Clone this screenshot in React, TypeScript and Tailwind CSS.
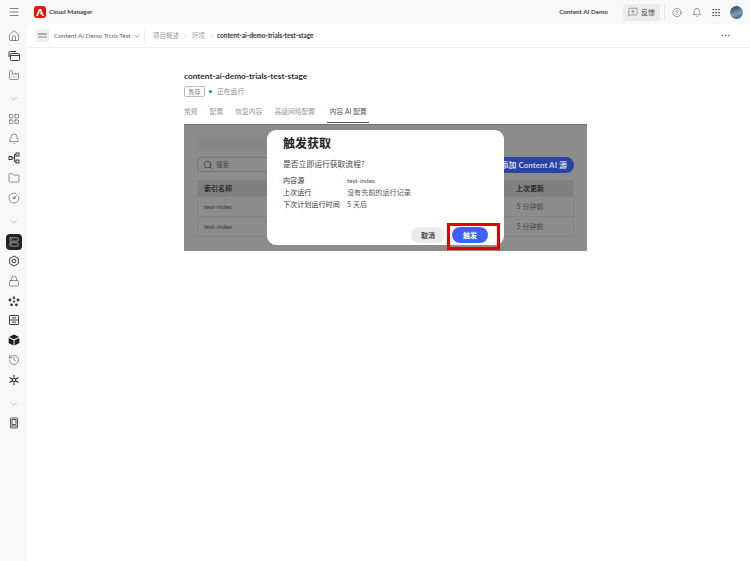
import {
  Bell,
  ChevronDown,
  ChevronRight,
  CircleGauge,
  CircleHelp,
  Factory,
  Folder,
  Grip,
  History,
  House,
  LayoutGrid,
  Lock,
  Menu,
  MessageSquarePlus,
  MoreHorizontal,
  Search,
  Server,
} from "lucide-react";
import type { ReactNode } from "react";

const font = "font-['Lato','Noto_Sans_CJK_SC',sans-serif]";

function StackIcon() {
  return (
    <svg width="12" height="12" viewBox="0 0 12 12" fill="none" stroke="#3a3a3a" strokeWidth="1">
      <path d="M1 7V2.500a1 1 0 0 1 1-1h6" />
      <rect x="2.500" y="3.500" width="9" height="7" rx="1" />
      <path d="M2.500 5.500h9" />
    </svg>
  );
}

function HexIcon() {
  return (
    <svg width="12" height="12" viewBox="0 0 12 12" fill="none" stroke="#3a3a3a" strokeWidth="1">
      <path d="M6 1l4.300 2.500v5L6 11 1.700 8.500v-5z" />
      <circle cx="6" cy="6" r="1.800" />
    </svg>
  );
}

function StarIcon() {
  return (
    <svg width="12" height="12" viewBox="0 0 12 12" fill="#3a3a3a">
      <path d="M6 .6l1.300 2.600L6 4.400 4.700 3.200z" />
      <circle cx="2" cy="5" r="1.400" />
      <circle cx="10" cy="5" r="1.400" />
      <circle cx="3.600" cy="9.800" r="1.400" />
      <circle cx="8.400" cy="9.800" r="1.400" />
      <circle cx="6" cy="6.500" r="1.100" />
    </svg>
  );
}

function PanelIcon() {
  return (
    <svg width="12" height="12" viewBox="0 0 12 12" fill="none" stroke="#3a3a3a" strokeWidth="1">
      <rect x="1.500" y="1.500" width="9" height="9" rx="0.800" />
      <path d="M1.500 6h9M4 3.800h4M4 8.200h4" />
    </svg>
  );
}

function CubeIcon() {
  return (
    <svg width="12" height="12" viewBox="0 0 12 12" fill="#1c1c1c">
      <path d="M6 .5l5 2.400L6 5.300 1 2.900z" />
      <path d="M.7 3.900l4.800 2.300v5.300L.7 9.100z" />
      <path d="M11.300 3.900L6.500 6.200v5.300l4.800-2.400z" />
    </svg>
  );
}

function SparkIcon() {
  return (
    <svg width="12" height="12" viewBox="0 0 12 12" fill="none" stroke="#2c2c2c" strokeWidth="1.100">
      <circle cx="6" cy="6" r="1.700" />
      <path d="M6 .8v3M6 8.200v3M1.500 3.400l2.600 1.500M7.900 7.100l2.600 1.500M1.500 8.600l2.600-1.500M7.900 4.900l2.600-1.500" />
    </svg>
  );
}

function FlowIcon() {
  return (
    <svg width="12" height="12" viewBox="0 0 12 12" fill="none" stroke="#3a3a3a" strokeWidth="1">
      <rect x="1" y="4.500" width="3" height="3" />
      <rect x="8" y="1" width="3" height="3" />
      <rect x="8" y="8" width="3" height="3" />
      <path d="M4 6h2.500M6.500 2.500V9.500M6.500 2.500H8M6.500 9.500H8" />
    </svg>
  );
}

function GuideIcon() {
  return (
    <svg width="12" height="12" viewBox="0 0 12 12" fill="none" stroke="#555" strokeWidth="1">
      <rect x="2.500" y="1" width="7" height="10" rx="0.600" />
      <path d="M4 2.500h4v5H4zM2.500 9h7" />
    </svg>
  );
}

function SideItem({ children }: { children: ReactNode }) {
  return <div className="h-[19.700px] flex items-center justify-center">{children}</div>;
}

function SideChevron() {
  return (
    <div className="h-[19.700px] mt-[4.500px] flex items-center justify-center">
      <ChevronDown size={10} strokeWidth={1} color="#666" />
    </div>
  );
}

function Sidebar() {
  const s = { size: 12, strokeWidth: 1.1, color: "#3a3a3a" };
  return (
    <aside className="w-[27px] shrink-0 flex flex-col pt-[2px]">
      <div className="h-[20px] flex items-center justify-center">
        <Menu size={12} strokeWidth={1.2} color="#333" />
      </div>
      <div className="h-[4px]" />
      <SideItem><House {...s} /></SideItem>
      <SideItem><StackIcon /></SideItem>
      <SideItem><Factory {...s} /></SideItem>
      <SideChevron />
      <SideItem><LayoutGrid {...s} /></SideItem>
      <SideItem><Bell {...s} /></SideItem>
      <SideItem><FlowIcon /></SideItem>
      <SideItem><Folder {...s} /></SideItem>
      <SideItem><CircleGauge {...s} /></SideItem>
      <SideChevron />
      <SideItem>
        <div className="w-[16px] h-[16px] rounded-[4px] bg-[#222222] flex items-center justify-center">
          <Server size={10} strokeWidth={1.3} color="#fff" />
        </div>
      </SideItem>
      <SideItem><HexIcon /></SideItem>
      <SideItem><Lock {...s} /></SideItem>
      <SideItem><StarIcon /></SideItem>
      <SideItem><PanelIcon /></SideItem>
      <SideItem><CubeIcon /></SideItem>
      <SideItem><History {...s} /></SideItem>
      <SideItem><SparkIcon /></SideItem>
      <SideChevron />
      <SideItem><GuideIcon /></SideItem>
    </aside>
  );
}

function TopBar() {
  return (
    <header className="h-[24px] flex items-center pl-[7px] pr-[7px]">
      <div className="w-[12px] h-[12px] rounded-[3px] bg-[#eb1000] flex items-center justify-center">
        <svg width="8" height="7" viewBox="0 0 8 7" fill="#fff">
          <path d="M2.900 0h2.200L8 7H6L5.200 5H3.500l.8-1.600h.5L4 1.500 2 7H0z" />
        </svg>
      </div>
      <span className="ml-[3px] text-[6.400px] font-bold text-[#444]">Cloud Manager</span>
      <span className="ml-auto text-[6.300px] font-bold text-[#444]">Content AI Demo</span>
      <div className="ml-[15px] w-[37px] h-[17px] rounded-[3px] bg-[#ececec] flex items-center justify-center gap-[3px]">
        <MessageSquarePlus size={10} strokeWidth={1.1} color="#444" />
        <span className="text-[7px] text-[#444]">反馈</span>
      </div>
      <div className="ml-[4px] w-px h-[16px] bg-[#e6e6e6]" />
      <div className="ml-[7px] w-[10px] flex justify-center"><CircleHelp size={11} strokeWidth={1.1} color="#333" /></div>
      <div className="ml-[10px] w-[10px] flex justify-center"><Bell size={11} strokeWidth={1.1} color="#333" /></div>
      <div className="ml-[9px] w-[10px] flex justify-center"><Grip size={11} strokeWidth={1.6} color="#222" /></div>
      <div className="ml-[9px] w-[13px] h-[13px] rounded-full bg-[linear-gradient(160deg,#1f3a55,#7f9db5_60%,#2d4a66)]" />
    </header>
  );
}

function SubHeader() {
  return (
    <div className="h-[24px] border-b border-[#efefef] flex items-center pl-[9px] pr-[19.500px]">
      <div className="w-[13px] h-[13px] bg-[#efefef] rounded-[1px] flex flex-col items-center justify-center gap-[1px]">
        <div className="w-[9px] h-[2px] bg-[#aaa]" />
        <div className="w-[9px] h-[2px] bg-[#bbb]" />
      </div>
      <span className="ml-[5px] w-[77px] whitespace-nowrap text-[6.300px] text-[#666]">Content AI Demo Trials Test</span>
      <ChevronDown className="ml-[2px]" size={8} strokeWidth={1.4} color="#444" />
      <div className="ml-[3px] w-px h-[12px] bg-[#eeeeee]" />
      <span className="ml-[8px] text-[6.500px] text-[#999]">项目概述</span>
      <ChevronRight className="ml-[3px]" size={7} strokeWidth={1} color="#999" />
      <span className="ml-[3px] text-[6.500px] text-[#999]">环境</span>
      <ChevronRight className="ml-[3px]" size={7} strokeWidth={1} color="#999" />
      <span className="ml-[2px] text-[6.500px] font-bold text-[#333]">content-ai-demo-trials-test-stage</span>
      <MoreHorizontal className="ml-auto" size={11} strokeWidth={1.4} color="#555" />
    </div>
  );
}

function Tabs() {
  const tabs = ["常规", "配置", "恢复内容", "高级网络配置"];
  return (
    <div className="mt-[6px] mb-[1px] flex gap-[12px] text-[6.800px] text-[#999] h-[20px]">
      {tabs.map((t) => (
        <div key={t} className="pt-[3px]">{t}</div>
      ))}
      <div className="pt-[3px] w-[42px] text-center border-b border-[#555] text-[#555] whitespace-nowrap">内容 AI 配置</div>
    </div>
  );
}

function Modal() {
  return (
    <div className="absolute left-[83px] top-[5px] w-[237px] h-[115px] rounded-[9px] bg-white pl-[16px] pt-[6px] text-[#333]">
      <h3 className="text-[12px] font-bold text-[#222] leading-[16px]">触发获取</h3>
      <p className="mt-[6px] text-[7.800px] leading-[12px] text-[#444]">是否立即运行获取流程?</p>
      <dl className="mt-[5px] grid grid-cols-[64px_1fr] text-[7.100px] leading-[12px]">
        <dt>内容源</dt>
        <dd className="text-[6.300px] text-[#555]">test-index</dd>
        <dt>上次运行</dt>
        <dd className="text-[#555]">没有先前的运行记录</dd>
        <dt>下次计划运行时间</dt>
        <dd className="text-[#555]">5 天后</dd>
      </dl>
      <div className="absolute left-[144px] top-[97px] flex gap-[7px]">
        <button className="w-[34px] h-[16px] rounded-full bg-[#ebebeb] text-[7px] text-[#444] font-bold">取消</button>
        <button className="w-[36px] h-[16px] rounded-full bg-[#3b63fb] text-[7px] text-white font-bold">触发</button>
      </div>
      <div className="absolute left-[180px] top-[93px] w-[53px] h-[27px] border-[3px] border-[#e00000]" />
    </div>
  );
}

function ScreenPanel() {
  const rows = ["test-index", "test-index"];
  return (
    <div className="relative h-[127px] bg-[#8c8c8c] px-[13px] pt-[12px] border-t border-[#777]">
      <div className="w-[70px] h-[14px] bg-[#858585] rounded-[2px] blur-[2px]" />
      <div className="mt-[6px] flex items-start justify-between">
        <div className="w-[80px] h-[15px] rounded-[3px] border border-[#777] flex items-center pl-[5px] gap-[3px] text-[6.500px] text-[#444]">
          <Search size={10} strokeWidth={1.8} color="#333" />
          搜索
        </div>
        <div className="h-[16px] px-[7px] rounded-full bg-[#2843a3] text-[8px] font-bold text-[#d0d4e8] leading-[16px]">
          添加 Content AI 源
        </div>
      </div>
      <div className="mt-[7px] border border-[#858585] text-[7px] text-[#333]">
        <div className="h-[15px] bg-[#7f7f7f] flex items-center justify-between pl-[6px] pr-[22px] font-semibold text-[#2a2a2a]">
          <span>索引名称</span>
          <span className="w-[42px] text-center">上次更新</span>
        </div>
        {rows.map((r, i) => (
          <div key={i} className="h-[20px] border-t border-[#838383] flex items-center justify-between pl-[6px] pr-[22px]">
            <span className="text-[6.300px] text-[#3a3a3a]">{r}</span>
            <span className="w-[42px] text-center text-[#444]">5 分钟前</span>
          </div>
        ))}
      </div>
      <Modal />
    </div>
  );
}

export default function App() {
  return (
    <div className={`w-[750px] h-[561px] overflow-hidden flex bg-[#f8f8f8] ${font}`}>
      <Sidebar />
      <div className="flex-1 min-w-0 flex flex-col">
        <TopBar />
        <main className="flex-1 bg-white rounded-tl-[6px]">
          <SubHeader />
          <section className="w-[403px] ml-[157px] pt-[22px]">
            <h1 className="text-[8.300px] font-bold text-[#2c2c2c] leading-[12px]">content-ai-demo-trials-test-stage</h1>
            <div className="mt-[4px] flex items-center h-[11px]">
              <span className="w-[21px] h-[11px] border border-[#bbb] rounded-[2px] text-[6px] text-[#777] text-center leading-[9px]">暂存</span>
              <span className="ml-[4px] w-[3px] h-[3px] rounded-full bg-[#1a8a72]" />
              <span className="ml-[5px] text-[6.800px] text-[#888]">正在运行</span>
            </div>
            <Tabs />
            <ScreenPanel />
          </section>
        </main>
      </div>
    </div>
  );
}
